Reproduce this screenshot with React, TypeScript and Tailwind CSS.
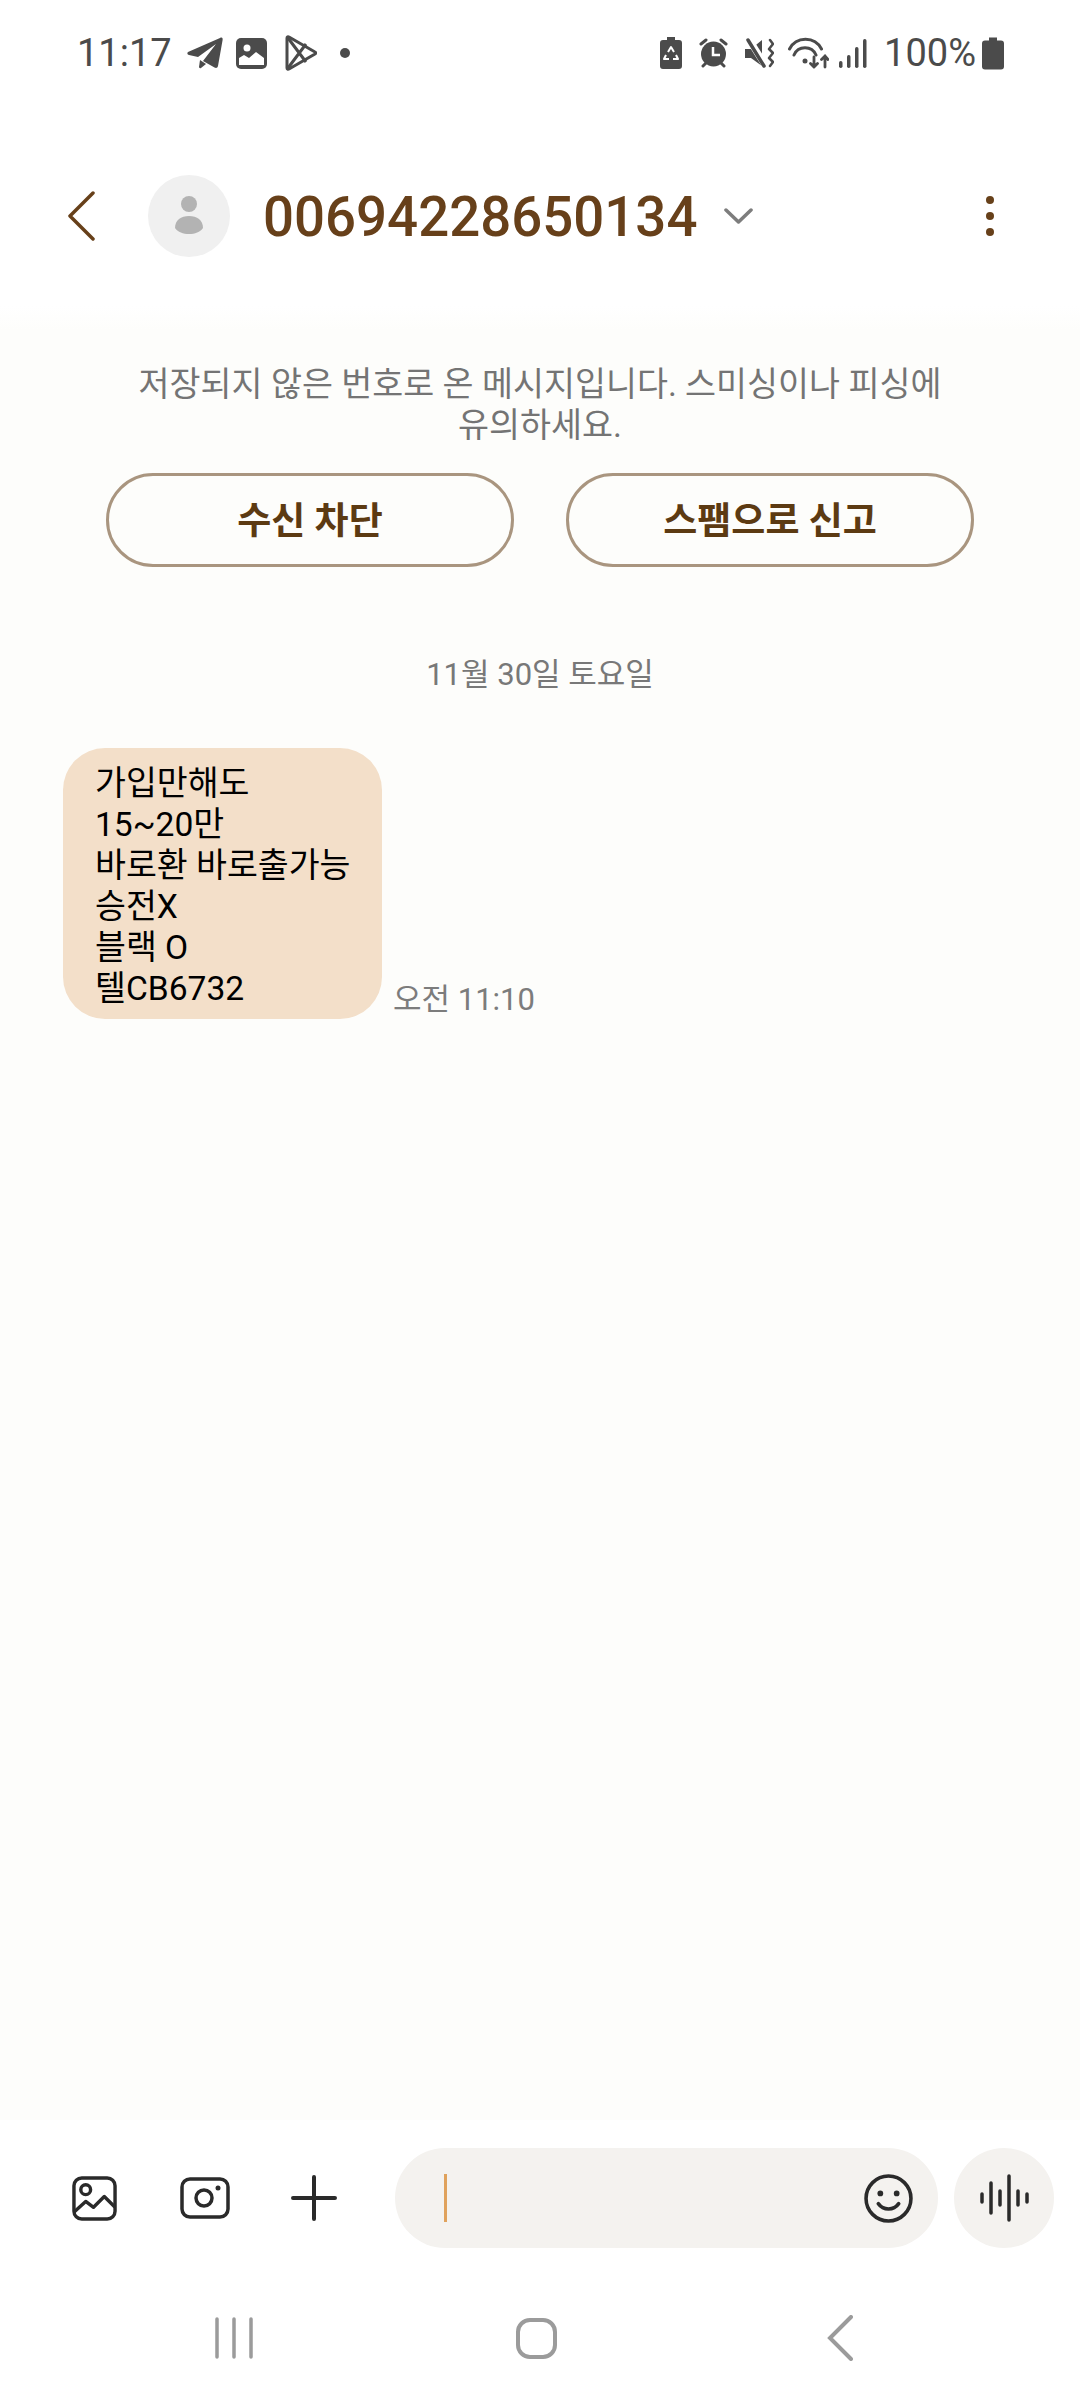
const sans = "font-['Roboto','Noto_Sans_CJK_KR',sans-serif]";

const LeftStatus = () => (
  <>
    <span className="w-[98px] text-[38px] leading-none">11:17</span>
    <svg width="36" height="32" viewBox="0 0 36 32" className="ml-[12px]" fill="#4b4b4b">
      <path d="M1 15L33 1c2-1 3 0 2.600 2L31 29c-.4 2-2 2.500-3.500 1.500L16 24 29 7 11 20 2 18c-2-.5-2-2 -1-3z" />
      <path d="M13 23l6 4-5 4c-1 .5-2 0-2-1z" />
    </svg>
    <svg width="31" height="31" viewBox="0 0 31 31" className="ml-[13px]">
      <rect width="31" height="31" rx="5" fill="#4b4b4b" />
      <circle cx="11" cy="10" r="3.500" fill="#fff" />
      <path d="M3 27v-7l5-3 5 3 7-6 8 6v7z" fill="#fff" />
    </svg>
    <svg width="32" height="36" viewBox="0 0 32 36" className="ml-[18px]" fill="none" stroke="#4b4b4b" strokeWidth="3" strokeLinejoin="round">
      <path d="M2 3c0-1 1-1.500 2-1l26 15c1 .5 1 1.500 0 2L4 34c-1 .5-2 0-2-1z" />
      <path d="M3 3l18 24M3 33l18-24" />
    </svg>
    <div className="ml-[23px] h-[10px] w-[10px] rounded-full bg-[#4b4b4b]" />
  </>
);

const RightStatus = () => (
  <div className="ml-auto flex items-center">
    <svg width="22" height="32" viewBox="0 0 22 32" fill="#4b4b4b">
      <path d="M7 0h8v3h4a3 3 0 0 1 3 3v23a3 3 0 0 1-3 3H3a3 3 0 0 1-3-3V6a3 3 0 0 1 3-3h4z" />
      <path d="M8 15l3-5 3 5M16 18l2 4h-5M6 18l-2 4h5" stroke="#fff" strokeWidth="2" fill="none" strokeLinejoin="round" />
    </svg>
    <svg width="29" height="30" viewBox="0 0 29 30" className="ml-[17px]" fill="#4b4b4b">
      <circle cx="14.500" cy="16" r="12.500" />
      <path d="M2 6l5-4M27 6l-5-4M4 28l3-3M25 28l-3-3" stroke="#4b4b4b" strokeWidth="3" strokeLinecap="round" />
      <path d="M14 9v8h7" stroke="#fff" strokeWidth="2.500" fill="none" />
    </svg>
    <svg width="29" height="30" viewBox="0 0 29 30" className="ml-[17px]" fill="#4b4b4b">
      <path d="M0 11h6l11-9v26L6 20H0z" />
      <path d="M3 0l17 27" stroke="#fff" strokeWidth="7" />
      <path d="M3 2l16 26" stroke="#4b4b4b" strokeWidth="3.500" strokeLinecap="round" />
      <path d="M25 2l3 4-4 5 4 4-4 5 4 4-3 4" stroke="#4b4b4b" strokeWidth="2.500" fill="none" strokeLinecap="round" strokeLinejoin="round" />
    </svg>
    <svg width="41" height="32" viewBox="0 0 41 32" className="ml-[14px]" fill="none" stroke="#4b4b4b" strokeWidth="3" strokeLinecap="round">
      <path d="M1.500 12a18 18 0 0 1 32 0M6 18a12 12 0 0 1 22 0" />
      <circle cx="17" cy="24" r="2.500" fill="#4b4b4b" stroke="none" />
      <path d="M26 20v10M22.500 26.500l3.500 3.500 3.500-3.500M37 30V19M33.500 22.500l3.500-3.500 3 3.500" strokeWidth="2.800" />
    </svg>
    <svg width="28" height="30" viewBox="0 0 28 30" className="ml-[10px]" fill="#4b4b4b">
      <rect x="0" y="23" width="3.500" height="7" rx="1.700" />
      <rect x="8" y="17" width="3.500" height="13" rx="1.700" />
      <rect x="16" y="9" width="3.500" height="21" rx="1.700" />
      <rect x="24" y="1" width="3.500" height="29" rx="1.700" />
    </svg>
    <span className="ml-[17px] text-[38px] leading-none">100%</span>
    <svg width="22" height="33" viewBox="0 0 22 32" className="ml-[6px]" fill="#4b4b4b">
      <path d="M7 0h8v3h4a3 3 0 0 1 3 3v23a3 3 0 0 1-3 3H3a3 3 0 0 1-3-3V6a3 3 0 0 1 3-3h4z" />
    </svg>
  </div>
);

const App = () => {
  return (
    <div className={`flex h-[2400px] w-[1080px] flex-col overflow-hidden bg-[#fdfdfb] ${sans}`}>
      <div className="bg-white">
        <div className="flex h-[106px] items-center pl-[77px] pr-[76px] text-[#4b4b4b]">
          <LeftStatus />
          <RightStatus />
        </div>

        <div className="flex h-[200px] items-center pt-[20px]">
          <svg width="28" height="50" viewBox="0 0 28 50" className="ml-[68px]" fill="none" stroke="#67401a" strokeWidth="3.500" strokeLinecap="round" strokeLinejoin="round">
            <path d="M25 2L2 25l23 23" />
          </svg>
          <div className="ml-[52px] flex h-[82px] w-[82px] items-center justify-center rounded-full bg-[#f0f0f0]">
            <svg width="28" height="40" viewBox="0 0 28 40" fill="#b3b3b3">
              <circle cx="14" cy="8" r="8" />
              <path d="M0 32c0-8 6-12 14-12s14 4 14 12c-3 4-8 6-14 6S3 36 0 32z" />
            </svg>
          </div>
          <span className="ml-[33px] mt-[2px] text-[54.6px] font-medium leading-[56px] text-[#67401a]">00694228650134</span>
          <svg width="29" height="18" viewBox="0 0 29 18" className="ml-[27px]" fill="none" stroke="#7d7d7d" strokeWidth="3.500" strokeLinecap="round" strokeLinejoin="round">
            <path d="M2 3l12.500 12L27 3" />
          </svg>
          <div className="ml-auto mr-[86px] flex flex-col gap-[8px]">
            <div className="h-[8px] w-[8px] rounded-full bg-[#67401a]" />
            <div className="h-[8px] w-[8px] rounded-full bg-[#67401a]" />
            <div className="h-[8px] w-[8px] rounded-full bg-[#67401a]" />
          </div>
        </div>
      </div>

      <main className="flex-1 bg-[linear-gradient(#ffffff,#fdfdfb_24px)] pt-[58px]">
        <p className="mx-auto w-[860px] text-center text-[33.7px] leading-[41px] text-[#747474]">
          저장되지 않은 번호로 온 메시지입니다. 스미싱이나 피싱에
          <br />
          유의하세요.
        </p>
        <div className="mt-[27px] flex justify-center gap-[52px]">
          <button className="h-[94px] w-[408px] rounded-full border-[3px] border-[#a9957f] pt-[4px] text-[37px] font-bold text-[#5c3a12]">수신 차단</button>
          <button className="h-[94px] w-[408px] rounded-full border-[3px] border-[#a9957f] pt-[4px] text-[37px] font-bold text-[#5c3a12]">스팸으로 신고</button>
        </div>
        <p className="mt-[88px] text-center text-[31px] leading-[40px] text-[#787878]">11월 30일 토요일</p>
        <div className="ml-[63px] mt-[53px] flex items-end">
          <div className="w-[319px] rounded-[42px] bg-[#f3dfc9] pb-[10px] pl-[32px] pt-[15px] text-[33.6px] leading-[41px] text-black">
            <div>가입만해도</div>
            <div>15~20만</div>
            <div>바로환 바로출가능</div>
            <div>승전X</div>
            <div>블랙 O</div>
            <div>텔CB6732</div>
          </div>
          <span className="ml-[11px] text-[31px] leading-[38px] text-[#7c7c7c]">오전 11:10</span>
        </div>
      </main>

      <div className="h-[280px] bg-white pt-[28px]">
        <div className="flex h-[100px] items-center pl-[72px]">
          <svg width="45" height="45" viewBox="0 0 46 46" fill="none" stroke="#2a2a2a" strokeWidth="3.500" strokeLinejoin="round" strokeLinecap="round">
            <rect x="2" y="2" width="42" height="42" rx="8" />
            <circle cx="14" cy="14" r="5" />
            <path d="M3 36l11-10 8 6 11-11 10 10" />
          </svg>
          <svg width="50" height="42" viewBox="0 0 50 42" className="ml-[63px]" fill="none" stroke="#2a2a2a" strokeWidth="3.500">
            <rect x="2" y="2" width="46" height="38" rx="8" />
            <circle cx="24" cy="21" r="8" />
            <circle cx="38" cy="11" r="2.500" fill="#2a2a2a" stroke="none" />
          </svg>
          <svg width="46" height="46" viewBox="0 0 46 46" className="ml-[61px]" fill="none" stroke="#2a2a2a" strokeWidth="4" strokeLinecap="round">
            <path d="M23 2v42M2 23h42" />
          </svg>
          <div className="ml-[58px] flex h-[100px] w-[543px] items-center rounded-full bg-[#f4f2ef] pl-[49px] pr-[25px]">
            <div className="h-[48px] w-[3px] bg-[#e0a25c]" />
            <svg width="49" height="49" viewBox="0 0 48 48" className="ml-auto" fill="none" stroke="#2a2a2a" strokeWidth="3.500" strokeLinecap="round">
              <circle cx="24" cy="24" r="22" />
              <circle cx="16" cy="19" r="2.800" fill="#2a2a2a" stroke="none" />
              <circle cx="32" cy="19" r="2.800" fill="#2a2a2a" stroke="none" />
              <path d="M14 29c5 7 15 7 20 0" />
            </svg>
          </div>
          <div className="ml-[16px] flex h-[100px] w-[100px] items-center justify-center rounded-full bg-[#f4f2ef]">
            <svg width="50" height="48" viewBox="0 0 50 48" fill="none" stroke="#2a2a2a" strokeWidth="3.500" strokeLinecap="round">
              <path d="M3 20v8M12 9v30M21 17v14M30 2v44M39 17v14M48 20v8" />
            </svg>
          </div>
        </div>
        <div className="mt-[69px] flex h-[42px] items-center">
          <svg width="38" height="42" viewBox="0 0 38 42" className="ml-[215px]" fill="none" stroke="#9b9b9b" strokeWidth="3.500" strokeLinecap="round">
            <path d="M2 2v38M19 2v38M36 2v38" />
          </svg>
          <div className="ml-[263px] h-[41px] w-[41px] rounded-[14px] border-[4px] border-[#9b9b9b]" />
          <svg width="26" height="46" viewBox="0 0 26 46" className="ml-[270px]" fill="none" stroke="#9b9b9b" strokeWidth="4" strokeLinecap="round">
            <path d="M24 2L3 23l21 21" />
          </svg>
        </div>
      </div>
    </div>
  );
};

export default App;
